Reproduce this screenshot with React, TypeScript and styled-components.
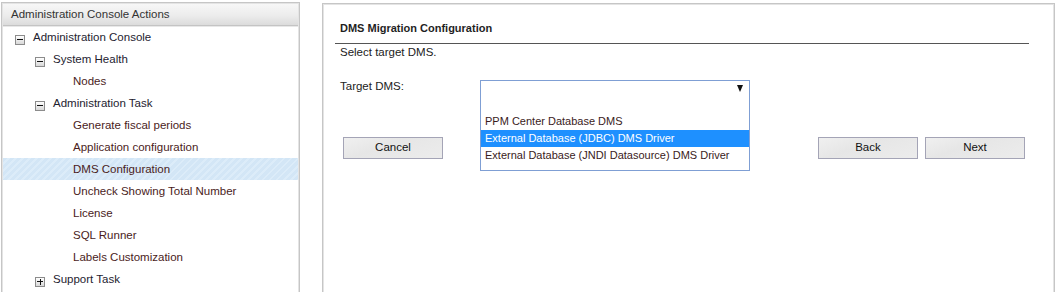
import React, { useState } from 'react';
import styled, { createGlobalStyle } from 'styled-components';

const GlobalStyle = createGlobalStyle`
  html, body {
    margin: 0;
    padding: 0;
    background: #ffffff;
    overflow: hidden;
  }
  body {
    font-family: "Liberation Sans", Arial, sans-serif;
    font-size: 11.5px;
    color: #222;
  }
`;

const Page = styled.div`
  display: flex;
  align-items: stretch;
  gap: 22px;
  padding: 2px 2px 0 1px;
  height: 292px;
  box-sizing: border-box;
  overflow: hidden;
`;

const SidePanel = styled.div`
  width: 299px;
  flex: none;
  height: 330px;
  border: 1px solid #c6c6c6;
  box-shadow: inset 0 0 0 1px #e4e4e4;
  box-sizing: border-box;
  padding: 1px;
  display: flex;
  flex-direction: column;
`;

const SideHeader = styled.div`
  height: 22px;
  line-height: 21px;
  padding-left: 8px;
  color: #333;
  background: linear-gradient(to bottom, #f7f7f7 0%, #ececec 55%, #dcdcdc 100%);
  border-bottom: 1px solid #c4c4c4;
  box-shadow: 0 1px 0 #e8e8e8;
  box-sizing: border-box;
`;

const Tree = styled.div`
  display: flex;
  flex-direction: column;
`;

const TreeRow = styled.div<{ level: number; selected?: boolean }>`
  display: flex;
  align-items: center;
  height: 22px;
  padding-left: ${({ level }) => 12 + level * 20}px;
  color: ${({ level }) => (level >= 2 ? '#4a1c1c' : '#1e2230')};
  background: ${({ selected }) =>
    selected
      ? 'repeating-linear-gradient(135deg, #d3e6f6 0px, #d3e6f6 3px, #dcecf9 3px, #dcecf9 5px)'
      : 'transparent'};
  white-space: nowrap;
`;

const ExpanderSlot = styled.span`
  width: 18px;
  flex: none;
  display: flex;
  align-items: center;
  margin-top: 5px;
`;

const Expander = styled.span`
  width: 8px;
  height: 8px;
  border: 1px solid #8c8c8c;
  background: linear-gradient(to bottom, #ffffff, #d8d8d8);
  position: relative;
  box-sizing: content-box;
`;

const ExpanderLine = styled.span<{ vertical?: boolean }>`
  position: absolute;
  background: #111;
  ${({ vertical }) =>
    vertical
      ? 'left: 3.5px; top: 1px; width: 1px; height: 6px;'
      : 'left: 1px; top: 3.5px; width: 6px; height: 1px;'}
`;

const MainPanel = styled.div`
  flex: 1;
  border: 1px solid #c6c6c6;
  box-shadow: inset 0 0 0 1px #e4e4e4;
  box-sizing: border-box;
  padding: 0 25px 0 12px;
  margin-top: 1px;
  height: 330px;
`;

const Title = styled.div`
  font-weight: bold;
  font-size: 11px;
  color: #1f1f1f;
  padding: 18px 5px 9px;
  border-bottom: 1px solid #555;
`;

const Hint = styled.div`
  padding-left: 5px;
  line-height: 16px;
  color: #222;
`;

const FormRow = styled.div`
  display: flex;
  align-items: flex-start;
  margin-top: 20px;
  padding-left: 5px;
  position: relative;
  z-index: 2;
`;

const FieldLabel = styled.div`
  width: 140px;
  line-height: 13px;
  color: #222;
`;

const SelectWrap = styled.div`
  position: relative;
  width: 270px;
`;

const SelectBox = styled.div`
  height: 17px;
  border: 1px solid #7f9fd4;
  box-sizing: border-box;
  background: #fff;
  display: flex;
  justify-content: flex-end;
  align-items: center;
  padding-right: 6px;
`;

const Arrow = styled.span`
  width: 0;
  height: 0;
  border-left: 3.5px solid transparent;
  border-right: 3.5px solid transparent;
  border-top: 7px solid #111;
`;

const OptionList = styled.div`
  position: absolute;
  top: 16px;
  left: 0;
  width: 270px;
  border: 1px solid #7f9fd4;
  border-top: none;
  box-sizing: border-box;
  background: #fff;
  padding-bottom: 6px;
`;

const Option = styled.div<{ active?: boolean; blank?: boolean }>`
  height: ${({ blank }) => (blank ? 17 : 17)}px;
  line-height: 17px;
  font-size: 11px;
  padding-left: 4px;
  white-space: nowrap;
  color: ${({ active }) => (active ? '#ffffff' : '#3a1b1b')};
  background: ${({ active }) => (active ? '#1e90ff' : 'transparent')};
`;

const ButtonRow = styled.div`
  display: flex;
  align-items: center;
  margin-top: 40px;
  padding: 0 4px 0 8px;
`;

const Spacer = styled.div`
  flex: 1;
`;

const Button = styled.button`
  width: 100px;
  height: 22px;
  border: 1px solid #a4a4b6;
  background: linear-gradient(160deg, #f0f0f0 0%, #e6e6e6 40%, #ececec 100%);
  font-family: "Liberation Sans", Arial, sans-serif;
  font-size: 11.5px;
  color: #111;
  padding: 0 0 2px;
  cursor: pointer;
  & + & {
    margin-left: 7px;
  }
`;

const treeItems: { label: string; level: number; icon?: 'minus' | 'plus'; selected?: boolean }[] = [
  { label: 'Administration Console', level: 0, icon: 'minus' },
  { label: 'System Health', level: 1, icon: 'minus' },
  { label: 'Nodes', level: 2 },
  { label: 'Administration Task', level: 1, icon: 'minus' },
  { label: 'Generate fiscal periods', level: 2 },
  { label: 'Application configuration', level: 2 },
  { label: 'DMS Configuration', level: 2, selected: true },
  { label: 'Uncheck Showing Total Number', level: 2 },
  { label: 'License', level: 2 },
  { label: 'SQL Runner', level: 2 },
  { label: 'Labels Customization', level: 2 },
  { label: 'Support Task', level: 1, icon: 'plus' },
];

const dmsOptions = [
  '',
  'PPM Center Database DMS',
  'External Database (JDBC) DMS Driver',
  'External Database (JNDI Datasource) DMS Driver',
];

const App: React.FC = () => {
  const [activeOption, setActiveOption] = useState<number>(2);

  return (
    <>
      <GlobalStyle />
      <Page>
        <SidePanel>
          <SideHeader>Administration Console Actions</SideHeader>
          <Tree>
            {treeItems.map((item, index) => (
              <TreeRow key={index} level={item.level} selected={item.selected}>
                <ExpanderSlot>
                  {item.icon && (
                    <Expander>
                      <ExpanderLine />
                      {item.icon === 'plus' && <ExpanderLine vertical />}
                    </Expander>
                  )}
                </ExpanderSlot>
                {item.label}
              </TreeRow>
            ))}
          </Tree>
        </SidePanel>
        <MainPanel>
          <Title>DMS Migration Configuration</Title>
          <Hint>Select target DMS.</Hint>
          <FormRow>
            <FieldLabel>Target DMS:</FieldLabel>
            <SelectWrap>
              <SelectBox>
                <Arrow />
              </SelectBox>
              <OptionList>
                {dmsOptions.map((opt, index) => (
                  <Option
                    key={index}
                    blank={opt === ''}
                    active={index === activeOption}
                    onMouseEnter={() => opt !== '' && setActiveOption(index)}
                  >
                    {opt}
                  </Option>
                ))}
              </OptionList>
            </SelectWrap>
          </FormRow>
          <ButtonRow>
            <Button>Cancel</Button>
            <Spacer />
            <Button>Back</Button>
            <Button>Next</Button>
          </ButtonRow>
        </MainPanel>
      </Page>
    </>
  );
};

export default App;
